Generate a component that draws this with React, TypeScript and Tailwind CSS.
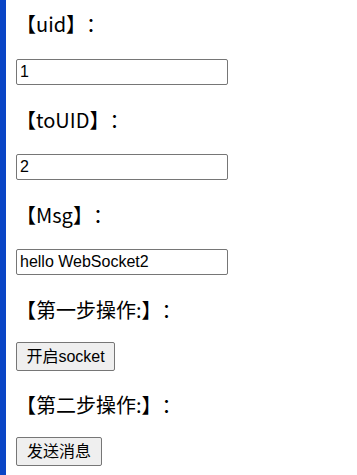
import React from 'react';

const labelCls =
  "h-[29px] leading-[29px] text-[20px] font-normal text-black whitespace-nowrap [text-spacing-trim:space-all] font-['Noto_Sans_CJK_SC',sans-serif]";
const inputCls =
  "block w-[212px] h-[26px] px-[3px] border border-[#767676] rounded-[2px] bg-white text-[16px] text-black font-['Liberation_Sans','Noto_Sans_CJK_SC',sans-serif] outline-none";
const buttonCls =
  "block h-[29px] border border-[#767676] rounded-[2px] bg-[#efefef] text-[16px] text-black leading-none font-['Liberation_Sans','Noto_Sans_CJK_SC',sans-serif]";

const App: React.FC = () => {
  return (
    <div className="flex min-h-screen bg-white">
      {/* left accent stripe */}
      <div className="w-[6px] shrink-0 bg-[#0a45c6]"></div>

      <div className="flex flex-col items-start pl-[10px] pt-[9px]">
        <div className={labelCls}>【uid】：</div>
        <input className={`${inputCls} mt-[21px]`} defaultValue="1" />

        <div className={`${labelCls} mt-[20px]`}>【toUID】：</div>
        <input className={`${inputCls} mt-[20px]`} defaultValue="2" />

        <div className={`${labelCls} mt-[20px]`}>【Msg】：</div>
        <input className={`${inputCls} mt-[20px]`} defaultValue="hello WebSocket2" />

        <div className={`${labelCls} mt-[20px]`}>【第一步操作:】：</div>
        <button className={`${buttonCls} w-[99px] mt-[18px]`}>开启socket</button>

        <div className={`${labelCls} mt-[19px]`}>【第二步操作:】：</div>
        <button className={`${buttonCls} w-[86px] mt-[18px]`}>发送消息</button>
      </div>
    </div>
  );
};

export default App;
